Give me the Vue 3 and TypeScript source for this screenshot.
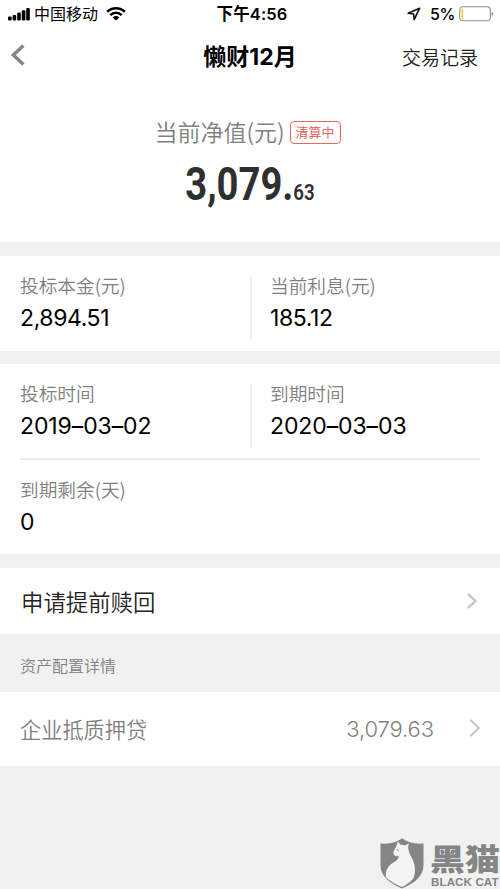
<script setup lang="ts">
interface Field {
  label: string
  value: string
}

const amounts: Field[] = [
  { label: '投标本金(元)', value: '2,894.51' },
  { label: '当前利息(元)', value: '185.12' },
]
const dates: Field[] = [
  { label: '投标时间', value: '2019–03–02' },
  { label: '到期时间', value: '2020–03–03' },
]
const remaining: Field = { label: '到期剩余(天)', value: '0' }
</script>

<template>
  <div class="screen">
    <header class="top">
      <div class="status">
        <div class="side">
          <svg class="signal" width="22" height="13" viewBox="0 0 22 13">
            <rect x="0" y="8.4" width="3.6" height="4.2" rx="1" />
            <rect x="4.6" y="7" width="3.6" height="5.6" rx="1" />
            <rect x="9.2" y="4.6" width="3.6" height="8" rx="1" />
            <rect x="13.8" y="2.3" width="3.6" height="10.3" rx="1" />
            <rect x="18.2" y="0" width="3.6" height="12.6" rx="1" />
          </svg>
          <span class="carrier">中国移动</span>
          <svg class="wifi" width="20" height="14" viewBox="0 0 20 14">
            <path d="M1.2 4.9a12.6 12.6 0 0 1 17.6 0M4.3 8.1a8.2 8.2 0 0 1 11.4 0" fill="none" stroke="#000" stroke-width="2.5" />
            <path d="M10 13.6 6.7 10.4a4.7 4.7 0 0 1 6.6 0Z" />
          </svg>
        </div>
        <span class="clock">下午4:56</span>
        <div class="side end">
          <svg class="locate" width="14" height="14" viewBox="0 0 14 14">
            <path d="M12.6 1.2 1.2 6.3l5.4.7.6 5.6Z" fill="none" stroke="#111" stroke-width="1.6" stroke-linejoin="round" />
          </svg>
          <span class="percent">5%</span>
          <svg class="battery" width="35" height="16" viewBox="0 0 35 16">
            <rect x=".7" y=".7" width="30.6" height="14" rx="3.2" fill="#fff" stroke="#91918b" stroke-width="1.1" />
            <rect x="2.4" y="2.5" width="1.8" height="10.4" rx=".8" fill="#f7cf45" />
            <path d="M32.7 5.4c2 .9 2 3.7 0 4.6Z" fill="#888" />
          </svg>
        </div>
      </div>
      <nav class="nav">
        <svg class="back" width="16" height="24" viewBox="0 0 16 24">
          <path d="M13.4 1.5 3.3 11l10.1 9.5" fill="none" stroke="#858585" stroke-width="3.4" />
        </svg>
        <h1>懒财12月</h1>
        <a class="records">交易记录</a>
      </nav>
      <div class="caption">
        <span>当前净值(元)</span>
        <b class="tag">清算中</b>
      </div>
      <div class="worth"><span class="whole">3,079.</span><span class="cents">63</span></div>
    </header>

    <section class="panel pair amounts">
      <div v-for="f in amounts" :key="f.label" class="field">
        <span class="label">{{ f.label }}</span>
        <span class="value">{{ f.value }}</span>
      </div>
    </section>

    <section class="panel dates">
      <div class="pair">
        <div v-for="f in dates" :key="f.label" class="field">
          <span class="label">{{ f.label }}</span>
          <span class="value">{{ f.value }}</span>
        </div>
      </div>
      <div class="field rest">
        <span class="label">{{ remaining.label }}</span>
        <span class="value">{{ remaining.value }}</span>
      </div>
    </section>

    <section class="row redeem">
      <span>申请提前赎回</span>
      <svg width="12" height="18" viewBox="0 0 12 18">
        <path d="m2 2 7.3 7L2 16" fill="none" stroke="#c4c4c4" stroke-width="2.4" />
      </svg>
    </section>
    <div class="heading">资产配置详情</div>
    <section class="row asset">
      <span>企业抵质押贷</span>
      <span class="sum">3,079.63</span>
      <svg width="12" height="20" viewBox="0 0 12 20">
        <path d="m1.5 1 8.3 8-8.3 8" fill="none" stroke="#c4c4c4" stroke-width="1.9" />
      </svg>
    </section>

    <footer class="brand">
      <svg width="45" height="51" viewBox="0 0 45 51">
        <path d="M.5 5.5C9 6.2 17 4.500 22 .3 27.500 4.500 35 6.200 43.500 5.500V27C43.500 38 35 45 22 50.500 9 45 .5 38 .5 27Z" fill="#858585" />
        <path d="M17.500 3.500C19 4.600 20 5.800 20.800 7c1.500-.3 3-.1 4.400.5 1.200-1 2.400-1.600 3.800-1.900-.8 1.700-.9 3.400-.6 5.400.4 4.300 3 7.200 4.700 11.500 2.300 6 2.600 12.500 .2 18C30 44.500 26 47 22 49 16 46.500 9.500 43 5.900 39.200 5 32 8.500 27.500 13.800 24.200c2.800-1.800 5-3.600 5.100-6-2.500.3-4.700-.3-5.300-2.200-.4-1.500.1-3.300 1.200-5.100 1.300-2.200 2.500-4 2.700-7.400Z" fill="#f3f3f3" />
        <path d="M16.600 11.600c1 .1 1.600.5 2.100 1.300" fill="none" stroke="#858585" stroke-width="1" />
      </svg>
      <div class="words">
        <span class="zh">黑猫</span>
        <span class="en">BLACK CAT</span>
      </div>
    </footer>
  </div>
</template>

<style>
body {
  margin: 0;
  background: #f1f1f1;
}
</style>

<style scoped>
.screen {
  width: 500px;
  height: 889px;
  overflow: hidden;
  display: flex;
  flex-direction: column;
  background: #f1f1f1;
  color: #000;
  font-family: Inter, "Noto Sans CJK SC", sans-serif;
}
.screen span,
.screen a,
.screen h1 {
  white-space: nowrap;
}
.top {
  height: 242px;
  background: #fff;
}
.status {
  height: 28px;
  display: grid;
  grid-template-columns: 1fr auto 1fr;
  align-items: center;
  padding: 0 6px 0 8px;
  font-size: 16px;
  line-height: 28px;
}
.side {
  display: flex;
  align-items: center;
}
.end {
  justify-content: flex-end;
}
.carrier {
  margin: 0 8px 0 4px;
}
.clock {
  padding-left: 2px;
  font-weight: 600;
  font-size: 16.5px;
  letter-spacing: 0.1px;
}
.percent {
  margin: 0 4px 0 9px;
  font-weight: 500;
  letter-spacing: -0.4px;
}
.nav {
  height: 56px;
  display: grid;
  grid-template-columns: 1fr auto 1fr;
  align-items: center;
  padding: 0 22px 0 10px;
}
.nav h1 {
  margin: 0 -6px 0 0;
  padding: 2px 0 0 6px;
  font-size: 23px;
  line-height: 54px;
  font-weight: 700;
}
.records {
  justify-self: end;
  color: #222;
  font-size: 19px;
  font-weight: 350;
}
.caption {
  margin-top: 30px;
  height: 36px;
  display: flex;
  align-items: center;
  justify-content: center;
  gap: 5px;
  padding-right: 5px;
  color: #808080;
  font-size: 23px;
  font-weight: 350;
}
.caption span {
  font-family: "Noto Sans CJK SC", sans-serif;
  line-height: 34px;
  height: 36px;
}
.tag {
  box-sizing: border-box;
  width: 51px;
  height: 23px;
  border: 1.5px solid #e4685f;
  border-radius: 4px;
  color: #e4584e;
  font-family: "Noto Sans CJK SC", sans-serif;
  font-size: 13px;
  line-height: 19px;
  font-weight: 350;
  text-align: center;
}
.worth {
  margin-top: 9px;
  height: 50px;
  display: flex;
  align-items: baseline;
  justify-content: center;
  color: #2f2f2f;
  font-family: Roboto, sans-serif;
  font-weight: 700;
  line-height: 50px;
  transform: scaleX(0.83);
}
.whole {
  font-size: 46px;
}
.cents {
  font-size: 22.5px;
  font-weight: 600;
}
.panel {
  background: #fff;
}
.amounts {
  margin-top: 14px;
  height: 95px;
}
.pair {
  display: grid;
  grid-template-columns: 1fr 1fr;
}
.field {
  display: flex;
  flex-direction: column;
  padding: 15px 0 0 20px;
}
.pair .field + .field {
  background: linear-gradient(#f1f1f1, #f1f1f1) 0 20px / 2px 64px no-repeat;
}
.label {
  height: 30px;
  color: #808080;
  font-family: "Noto Sans CJK SC", sans-serif;
  font-size: 18.7px;
  font-weight: 350;
  line-height: 28px;
}
.value {
  height: 34px;
  font-size: 23px;
  line-height: 34px;
  letter-spacing: -0.1px;
}
.amounts .value {
  letter-spacing: -0.4px;
}
.dates {
  margin-top: 13px;
  height: 190px;
}
.dates .pair {
  height: 94px;
}
.rest {
  margin: 0 20px;
  padding: 15px 0 0;
  border-top: 2px solid #ececec;
}
.row {
  display: flex;
  align-items: center;
  background: #fff;
}
.redeem {
  margin-top: 14px;
  height: 66px;
  padding: 0 22px 0 21px;
  justify-content: space-between;
  color: #222;
  font-size: 22.4px;
  font-weight: 350;
}
.heading {
  height: 58px;
  padding-left: 20px;
  color: #808080;
  font-size: 16px;
  font-weight: 350;
  line-height: 64px;
}
.asset {
  height: 74px;
  padding: 0 19px 0 20px;
  color: #808080;
  font-size: 21.2px;
  font-weight: 350;
}
.asset span:first-child {
  padding-bottom: 2px;
}
.sum {
  margin-left: auto;
  margin-right: 35px;
  font-size: 22px;
  letter-spacing: -0.1px;
}
.brand {
  margin-top: auto;
  height: 51px;
  display: flex;
  align-items: flex-start;
  padding-left: 380px;
  color: #858585;
}
.words {
  display: flex;
  flex-direction: column;
  margin-left: 5px;
}
.zh {
  height: 37px;
  font-family: "Noto Sans CJK SC", sans-serif;
  font-size: 35px;
  font-weight: 900;
  line-height: 37px;
  transform: scaleY(0.86);
}
.en {
  padding-left: 1px;
  font-family: "Liberation Sans", sans-serif;
  font-size: 11.6px;
  font-weight: 700;
  line-height: 14px;
  letter-spacing: 0.1px;
}
</style>
